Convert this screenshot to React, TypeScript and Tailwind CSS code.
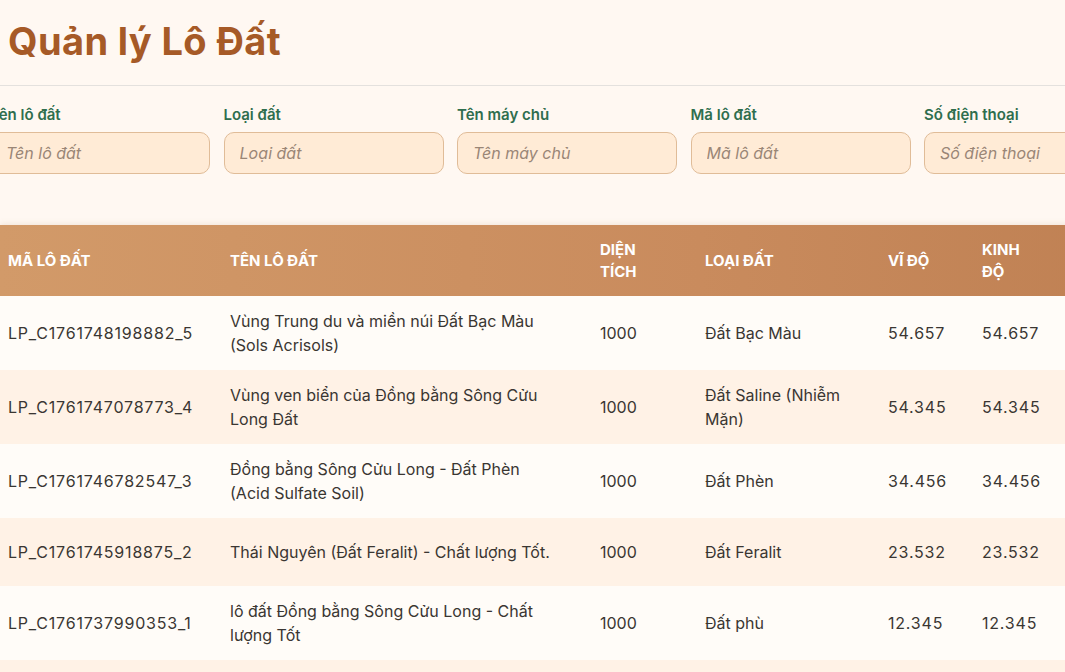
import React from 'react'

const filters = ['Tên lô đất', 'Loại đất', 'Tên máy chủ', 'Mã lô đất', 'Số điện thoại', 'Email']

const rows = [
  { ma: 'LP_C1761748198882_5', ten: 'Vùng Trung du và miền núi Đất Bạc Màu (Sols Acrisols)', dt: '1000', loai: 'Đất Bạc Màu', vi: '54.657', kinh: '54.657' },
  { ma: 'LP_C1761747078773_4', ten: 'Vùng ven biển của Đồng bằng Sông Cửu Long Đất', dt: '1000', loai: 'Đất Saline (Nhiễm Mặn)', vi: '54.345', kinh: '54.345' },
  { ma: 'LP_C1761746782547_3', ten: 'Đồng bằng Sông Cửu Long - Đất Phèn (Acid Sulfate Soil)', dt: '1000', loai: 'Đất Phèn', vi: '34.456', kinh: '34.456' },
  { ma: 'LP_C1761745918875_2', ten: 'Thái Nguyên (Đất Feralit) - Chất lượng Tốt.', dt: '1000', loai: 'Đất Feralit', vi: '23.532', kinh: '23.532' },
  { ma: 'LP_C1761737990353_1', ten: 'lô đất Đồng bằng Sông Cửu Long - Chất lượng Tốt', dt: '1000', loai: 'Đất phù', vi: '12.345', kinh: '12.345' },
  { ma: 'LP_C1761730012345_0', ten: 'Lô đất thử nghiệm', dt: '1000', loai: 'Đất phù sa', vi: '10.123', kinh: '10.123' },
]

export default function App() {
  return (
    <div className="min-h-screen w-full overflow-hidden bg-[#fff8f2] font-['Inter',sans-serif] text-[#3a3632]">
      {/* Header */}
      <div className="border-b border-[#e4e1de] px-2 pt-[21px] pb-[24px]">
        <h1 className="text-[38px] font-bold leading-[40px] tracking-[0.01em] text-[#a65a27]">Quản lý Lô Đất</h1>
      </div>

      {/* Filters */}
      <div className="ml-[-10px] flex gap-[13.5px] pt-[19px]">
        {filters.map((f) => (
          <div key={f} className="w-[220px] shrink-0">
            <label className="block text-[15px] font-semibold leading-5 text-[#2f6e4e]">{f}</label>
            <input
              placeholder={f}
              className="mt-[7px] h-[42px] w-full rounded-[10px] border border-[#e0bc98] bg-[#ffebd6] px-[15px] text-[16px] italic text-[#3a3632] placeholder:text-[#9a8676] outline-none"
            />
          </div>
        ))}
      </div>

      {/* Table */}
      <div className="mt-[51px] w-[1400px] shadow-[0_-1px_6px_rgba(160,110,70,0.15)]">
        <table className="w-[1400px] table-fixed border-collapse text-left">
          <colgroup>
            <col className="w-[222px]" />
            <col className="w-[370px]" />
            <col className="w-[105px]" />
            <col className="w-[183px]" />
            <col className="w-[94px]" />
            <col className="w-[90px]" />
            <col className="w-[168px]" />
            <col className="w-[168px]" />
          </colgroup>
          <thead>
            <tr className="bg-gradient-to-r from-[#d29a69] via-[#c98b5d] to-[#b97a4d] text-[15px] font-bold uppercase leading-[22px] text-white">
              <th className="pt-[14px] pb-[13px] pl-2 pr-6 align-middle">Mã lô đất</th>
              <th className="pt-[14px] pb-[13px] pl-2 pr-9 align-middle">Tên lô đất</th>
              <th className="pt-[14px] pb-[13px] pl-2 pr-6 align-middle">Diện tích</th>
              <th className="pt-[14px] pb-[13px] pl-2 pr-6 align-middle">Loại đất</th>
              <th className="pt-[14px] pb-[13px] pl-2 pr-6 align-middle">Vĩ độ</th>
              <th className="pt-[14px] pb-[13px] pl-2 pr-6 align-middle">Kinh độ</th>
              <th className="pt-[14px] pb-[13px] pl-2 pr-6 align-middle">Máy chủ</th>
              <th className="pt-[14px] pb-[13px] pl-2 pr-6 align-middle">Thao tác</th>
            </tr>
          </thead>
          <tbody className="text-[16px] leading-6">
            {rows.map((r, i) => (
              <tr key={r.ma} className={i % 2 === 0 ? 'bg-[#fffcf8]' : 'bg-[#fff2e6]'}>
                <td className="pt-[12.5px] pb-[13.5px] pl-2 pr-6 align-middle tracking-[0.05em]">{r.ma}</td>
                <td className="pt-[12.5px] pb-[13.5px] pl-2 pr-9 align-middle">{r.ten}</td>
                <td className="pt-[12.5px] pb-[13.5px] pl-2 pr-6 align-middle">{r.dt}</td>
                <td className="pt-[12.5px] pb-[13.5px] pl-2 pr-6 align-middle">{r.loai}</td>
                <td className="pt-[12.5px] pb-[13.5px] pl-2 pr-6 align-middle tracking-[0.05em]">{r.vi}</td>
                <td className="pt-[12.5px] pb-[13.5px] pl-2 pr-6 align-middle tracking-[0.05em]">{r.kinh}</td>
                <td className="pt-[12.5px] pb-[13.5px] pl-2 pr-6 align-middle">Nguyễn Văn A</td>
                <td className="pt-[12.5px] pb-[13.5px] pl-2 pr-6 align-middle">
                  <div className="flex gap-2">
                    <button className="h-[42px] rounded-lg bg-[#c98b5d] px-3 text-[14px] font-semibold text-white">Sửa</button>
                    <button className="h-[42px] rounded-lg bg-[#b94a3a] px-3 text-[14px] font-semibold text-white">Xóa</button>
                  </div>
                </td>
              </tr>
            ))}
          </tbody>
        </table>
      </div>
    </div>
  )
}
